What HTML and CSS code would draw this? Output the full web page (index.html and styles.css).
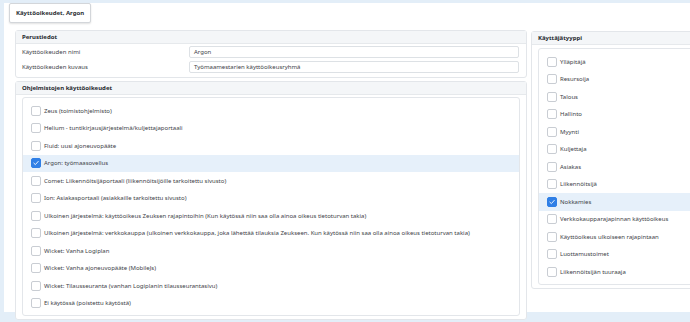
FILE: index.html
```html
<!DOCTYPE html>
<html lang="fi">
<head>
<meta charset="utf-8">
<title>Käyttöoikeudet, Argon</title>
<link rel="stylesheet" href="styles.css">
</head>
<body>
<div class="page">
  <div class="panel">
    <div class="tab">Käyttöoikeudet, Argon</div>
    <div class="grid">
      <div class="col">
        <section class="card basic">
          <div class="card-head">Perustiedot</div>
          <div class="form">
            <div class="frow"><span class="flabel">Käyttöoikeuden nimi</span><span class="input">Argon</span></div>
            <div class="frow"><span class="flabel">Käyttöoikeuden kuvaus</span><span class="input">Työmaamestarien käyttöoikeusryhmä</span></div>
          </div>
        </section>
        <section class="card">
          <div class="card-head">Ohjelmistojen käyttöoikeudet</div>
          <div class="list">
            <div class="item"><span class="cb"></span>Zeus (toimistohjelmisto)</div>
            <div class="item"><span class="cb"></span>Helium - tuntikirjausjärjestelmä/kuljettajaportaali</div>
            <div class="item"><span class="cb"></span>Fluid: uusi ajoneuvopääte</div>
            <div class="item sel"><span class="cb on"><svg viewBox="0 0 10 10"><path d="M2.3 5.2 L4.2 7 L7.8 3" fill="none" stroke="#fff" stroke-width="1.1" stroke-linecap="round" stroke-linejoin="round"/></svg></span>Argon: työmaasovellus</div>
            <div class="item"><span class="cb"></span>Comet: Liikennöitsijäportaali (liikennöitsijöille tarkoitettu sivusto)</div>
            <div class="item"><span class="cb"></span>Ion: Asiakasportaali (asiakkaille tarkoitettu sivusto)</div>
            <div class="item"><span class="cb"></span>Ulkoinen järjestelmä: käyttöoikeus Zeuksen rajapintoihin (Kun käytössä niin saa olla ainoa oikeus tietoturvan takia)</div>
            <div class="item"><span class="cb"></span>Ulkoinen järjestelmä: verkkokauppa (ulkoinen verkkokauppa, joka lähettää tilauksia Zeukseen. Kun käytössä niin saa olla ainoa oikeus tietoturvan takia)</div>
            <div class="item"><span class="cb"></span>Wicket: Vanha Logiplan</div>
            <div class="item"><span class="cb"></span>Wicket: Vanha ajoneuvopääte (MobileJs)</div>
            <div class="item"><span class="cb"></span>Wicket: Tilausseuranta (vanhan Logiplanin tilausseurantasivu)</div>
            <div class="item"><span class="cb"></span>Ei käytössä (poistettu käytöstä)</div>
          </div>
        </section>
      </div>
      <div class="col">
        <section class="card side">
          <div class="card-head">Käyttäjätyyppi</div>
          <div class="list">
            <div class="item"><span class="cb"></span>Ylläpitäjä</div>
            <div class="item"><span class="cb"></span>Resursoija</div>
            <div class="item"><span class="cb"></span>Talous</div>
            <div class="item"><span class="cb"></span>Hallinto</div>
            <div class="item"><span class="cb"></span>Myynti</div>
            <div class="item"><span class="cb"></span>Kuljettaja</div>
            <div class="item"><span class="cb"></span>Asiakas</div>
            <div class="item"><span class="cb"></span>Liikennöitsijä</div>
            <div class="item sel"><span class="cb on"><svg viewBox="0 0 10 10"><path d="M2.3 5.2 L4.2 7 L7.8 3" fill="none" stroke="#fff" stroke-width="1.1" stroke-linecap="round" stroke-linejoin="round"/></svg></span>Nokkamies</div>
            <div class="item"><span class="cb"></span>Verkkokauppa­rajapinnan käyttöoikeus</div>
            <div class="item"><span class="cb"></span>Käyttöoikeus ulkoiseen rajapintaan</div>
            <div class="item"><span class="cb"></span>Luottamustoimet</div>
            <div class="item"><span class="cb"></span>Liikennöitsijän tuuraaja</div>
          </div>
        </section>
      </div>
    </div>
  </div>
</div>
</body>
</html>
```

FILE: styles.css
```css
* { box-sizing: border-box; }
html, body { margin: 0; padding: 0; }
body {
  background: #e3eef8;
  font-family: "Noto Sans", "Open Sans", sans-serif;
  color: #3d4248;
  width: 690px;
  height: 322px;
  overflow: hidden;
}
.page {
  padding: 13px 0 0 4px;
}
.panel {
  background: #fff;
  width: 686px;
  height: 309px;
  padding: 0 0 0 11px;
  overflow: hidden;
}
.tab {
  display: block;
  width: max-content;
  margin: -10px 0 0 -6px;
  height: 20px;
  padding: 0 6px;
  line-height: 19px;
  background: #fff;
  border: 1px solid #d3d6da;
  border-radius: 2px;
  box-shadow: 0 1px 2px rgba(0,0,0,0.12);
  font-size: 6px;
  font-weight: 700;
  color: #2a2e33;
}
.panel { overflow: visible; }
.grid {
  display: grid;
  grid-template-columns: 512px 170px;
  column-gap: 4px;
  margin-top: 7px;
  width: 675px;
  overflow: hidden;
}
.col {
  display: flex;
  flex-direction: column;
  gap: 3px;
}
.side { margin-top: 1px; }
.card {
  border: 1px solid #e3e6ea;
  border-radius: 3px;
  background: #fff;
  padding: 0 6px 3px 6px;
}
.basic { padding-bottom: 4px; }
.card-head {
  margin: 0 -6px;
  background: #f4f6f8;
  border-bottom: 1px solid #e6e9ec;
  height: 13px;
  line-height: 12px;
  padding: 0 6px;
  font-size: 6px;
  font-weight: 700;
  color: #24282d;
}
.form {
  padding-top: 2px;
  display: flex;
  flex-direction: column;
  gap: 3px;
}
.frow {
  display: flex;
  align-items: center;
  height: 12px;
}
.flabel {
  width: 167px;
  font-size: 6px;
}
.input {
  flex: 1;
  height: 12px;
  border: 1px solid #dde1e5;
  border-radius: 2px;
  line-height: 10px;
  padding: 0 4px;
  font-size: 6px;
  margin-right: 1px;
}
.list {
  margin-top: 2px;
  border: 1px solid #e3e6ea;
  border-radius: 3px;
  padding: 4px 0 3px 0;
}
.side .list { margin-top: 3px; }
.item {
  display: flex;
  align-items: center;
  height: 17.5px;
  padding-left: 8px;
  font-size: 6px;
  white-space: nowrap;
}
.item.sel { background: #e6f0fa; }
.cb {
  flex: none;
  width: 10px;
  height: 10px;
  border: 1px solid #c9cdd3;
  border-radius: 2px;
  background: #fff;
  margin-right: 3px;
}
.cb.on {
  background: #2f7fe6;
  border-color: #2f7fe6;
}
.cb svg { display: block; width: 8px; height: 8px; }
```
